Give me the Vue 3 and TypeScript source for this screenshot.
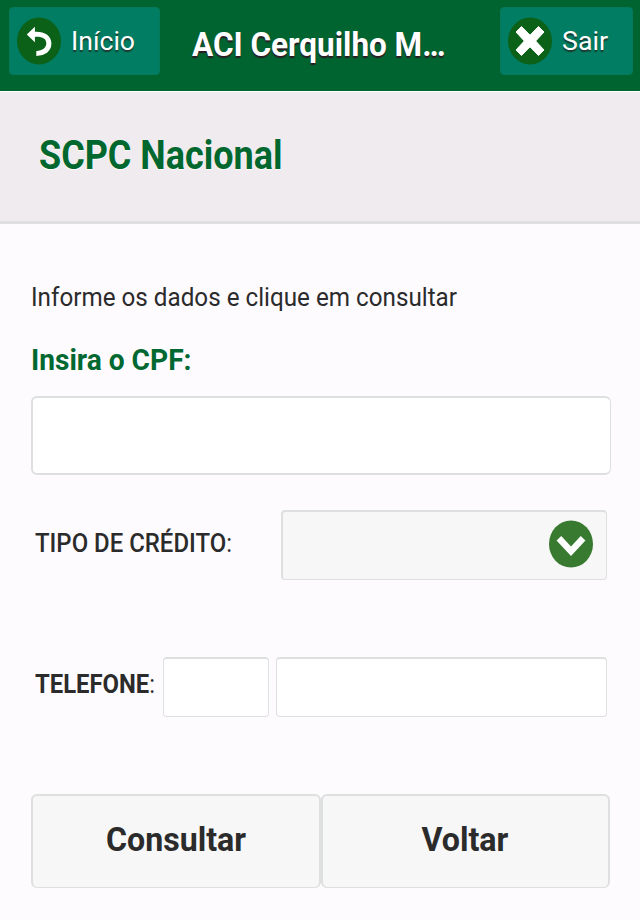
<script setup lang="ts">
import { ref } from 'vue'
import type { Directive } from 'vue'

// Condenses a line of text horizontally to the given width in pixels.
const vFit: Directive<HTMLElement, number> = {
  mounted(el, { value }) {
    el.style.transform = `scaleX(${value / el.getBoundingClientRect().width})`
  },
}

const cpf = ref('')
const areaCode = ref('')
const phone = ref('')
</script>

<template>
  <div class="screen">
    <header class="topbar">
      <button class="nav home" type="button">
        <svg class="nav-icon" viewBox="0 0 44 48">
          <ellipse cx="22" cy="24" rx="22" ry="23.5" fill="#0b6118" />
          <path d="M9.8 17.4 17.9 9.8V14.7C27.5 14.3 34.4 18.4 34.4 26.6C34.4 34 28.5 38.8 19.3 38.9V34.1C25.8 33.7 29.3 30.7 29.3 26.3C29.3 21.6 25.1 19.4 17.9 19.9V25.2Z" fill="#fff" />
        </svg>
        <span v-fit="64" class="text nav-text">Início</span>
      </button>
      <h1 class="title"><span v-fit="253.5" class="text">ACI Cerquilho M…</span></h1>
      <button class="nav exit" type="button">
        <svg class="nav-icon" viewBox="0 0 44 48">
          <ellipse cx="22" cy="24" rx="22" ry="23.5" fill="#0b6118" />
          <path d="M13.5 9.5 22 18.2 30.5 9.5 36 15 27.7 24 36 33 30.5 38.5 22 29.8 13.5 38.5 8 33 16.3 24 8 15Z" fill="#fff" stroke="#fff" stroke-width="1" stroke-linejoin="round" />
        </svg>
        <span v-fit="46" class="text nav-text">Sair</span>
      </button>
    </header>

    <div class="heading">
      <h2><span v-fit="243.5" class="text">SCPC Nacional</span></h2>
    </div>

    <main class="form">
      <p class="intro"><span v-fit="426" class="text">Informe os dados e clique em consultar</span></p>
      <label class="cpf-label" for="cpf"><span v-fit="160.5" class="text">Insira o CPF:</span></label>
      <input id="cpf" v-model="cpf" class="box cpf" type="text" />

      <div class="row credit">
        <span v-fit="197" class="text label"><b>TIPO DE CRÉDITO</b>:</span>
        <button class="box select" type="button">
          <svg class="chevron" viewBox="0 0 44 48">
            <ellipse cx="22" cy="24" rx="22" ry="23.6" fill="#387a30" />
            <path d="M9.9 18.3 22 31.2 34.1 18.3" fill="none" stroke="#fff" stroke-width="6.4" />
          </svg>
        </button>
      </div>

      <div class="row phone">
        <span v-fit="120" class="text label"><b>TELEFONE</b>:</span>
        <input v-model="areaCode" class="box area" type="text" />
        <input v-model="phone" class="box number" type="text" />
      </div>

      <div class="actions">
        <button class="box action" type="button"><span v-fit="140" class="text">Consultar</span></button>
        <button class="box action" type="button"><span v-fit="87" class="text">Voltar</span></button>
      </div>
    </main>
  </div>
</template>

<style>
body {
  margin: 0;
  background: #fefbff;
}
</style>

<style scoped>
.screen {
  width: 640px;
  height: 920px;
  overflow: hidden;
  background: #fefbff;
  color: #2b2b2b;
  font-family: Roboto, "Liberation Sans", sans-serif;
}
.screen * {
  box-sizing: border-box;
}
button,
input {
  margin: 0;
  font-family: inherit;
  color: inherit;
  outline: none;
}
h1,
h2,
p {
  margin: 0;
}
.text {
  display: inline-block;
  flex: none;
  white-space: nowrap;
  transform-origin: left center;
}
.topbar {
  display: flex;
  align-items: flex-start;
  height: 91px;
  padding: 7px 7px 0 9px;
  background: #006430;
}
.nav {
  display: flex;
  align-items: center;
  height: 68px;
  padding: 0 0 0 7px;
  border: 1px solid #05795a;
  border-radius: 4px;
  background: #007d62;
  color: #fff;
  overflow: hidden;
}
.home {
  width: 151px;
}
.exit {
  width: 133px;
}
.nav-icon {
  flex: none;
  width: 44px;
  height: 48px;
  margin-right: 10px;
}
.nav-text {
  font-size: 26px;
  line-height: 30px;
  text-shadow: 0 2px 1px #1b3a30;
}
.title {
  flex: 1;
  padding: 16px 0 0 32px;
  width: 0;
  font-size: 34px;
  font-weight: 700;
  line-height: 42px;
  color: #fff;
  text-shadow: 0 2px 1px #2b1b24;
}
.heading {
  height: 133px;
  padding: 41px 0 0 39px;
  border-top: 1px solid #fff;
  border-bottom: 3px solid #dfdfe0;
  background: #efebee;
  color: #00672f;
}
.heading h2 {
  font-size: 40px;
  font-weight: 700;
  line-height: 46px;
  text-shadow: 0 1px 1px #fff;
}
.form {
  display: flex;
  flex-direction: column;
  padding: 58px 30px 0 31px;
}
.intro {
  height: 30px;
  font-size: 26px;
  line-height: 30px;
}
.cpf-label {
  height: 36px;
  margin-top: 30px;
  color: #006830;
  font-size: 30px;
  font-weight: 700;
  line-height: 36px;
}
.box {
  padding: 0;
  border: 2px solid #dedfdf;
  border-radius: 6px;
  background: #fff;
}
.cpf {
  width: 580px;
  height: 79px;
  margin-top: 18px;
  border-right-width: 1px;
}
.row {
  display: flex;
  padding: 0 3px 0 4px;
}
.label {
  font-size: 25.5px;
  line-height: 30px;
}
.label b {
  font-weight: 500;
}
.credit {
  justify-content: space-between;
  margin-top: 35px;
}
.credit .label {
  margin-top: 18px;
}
.select {
  display: flex;
  align-items: center;
  justify-content: flex-end;
  width: 326px;
  height: 70px;
  padding: 0 13px 4px 0;
  border-width: 2px 1px 1px 2px;
  border-radius: 4px;
  background: #f7f7f7;
}
.chevron {
  width: 44px;
  height: 48px;
}
.phone {
  justify-content: flex-end;
  margin-top: 77px;
}
.phone .label {
  margin: 12px auto 0 0;
}
.phone .label b {
  font-weight: 700;
}
.area,
.number {
  height: 60px;
  border-width: 2px 1px 1px;
  border-radius: 4px;
}
.area {
  width: 106px;
  margin-right: 7px;
}
.number {
  width: 332px;
}
.actions {
  display: flex;
  margin-top: 77px;
}
.action {
  display: flex;
  justify-content: center;
  width: 290px;
  height: 94px;
  padding-top: 22px;
  border-bottom-width: 1px;
  background: #f7f7f7;
  font-size: 34px;
  font-weight: 700;
  line-height: 42px;
}
.action .text {
  transform-origin: center;
}
</style>
